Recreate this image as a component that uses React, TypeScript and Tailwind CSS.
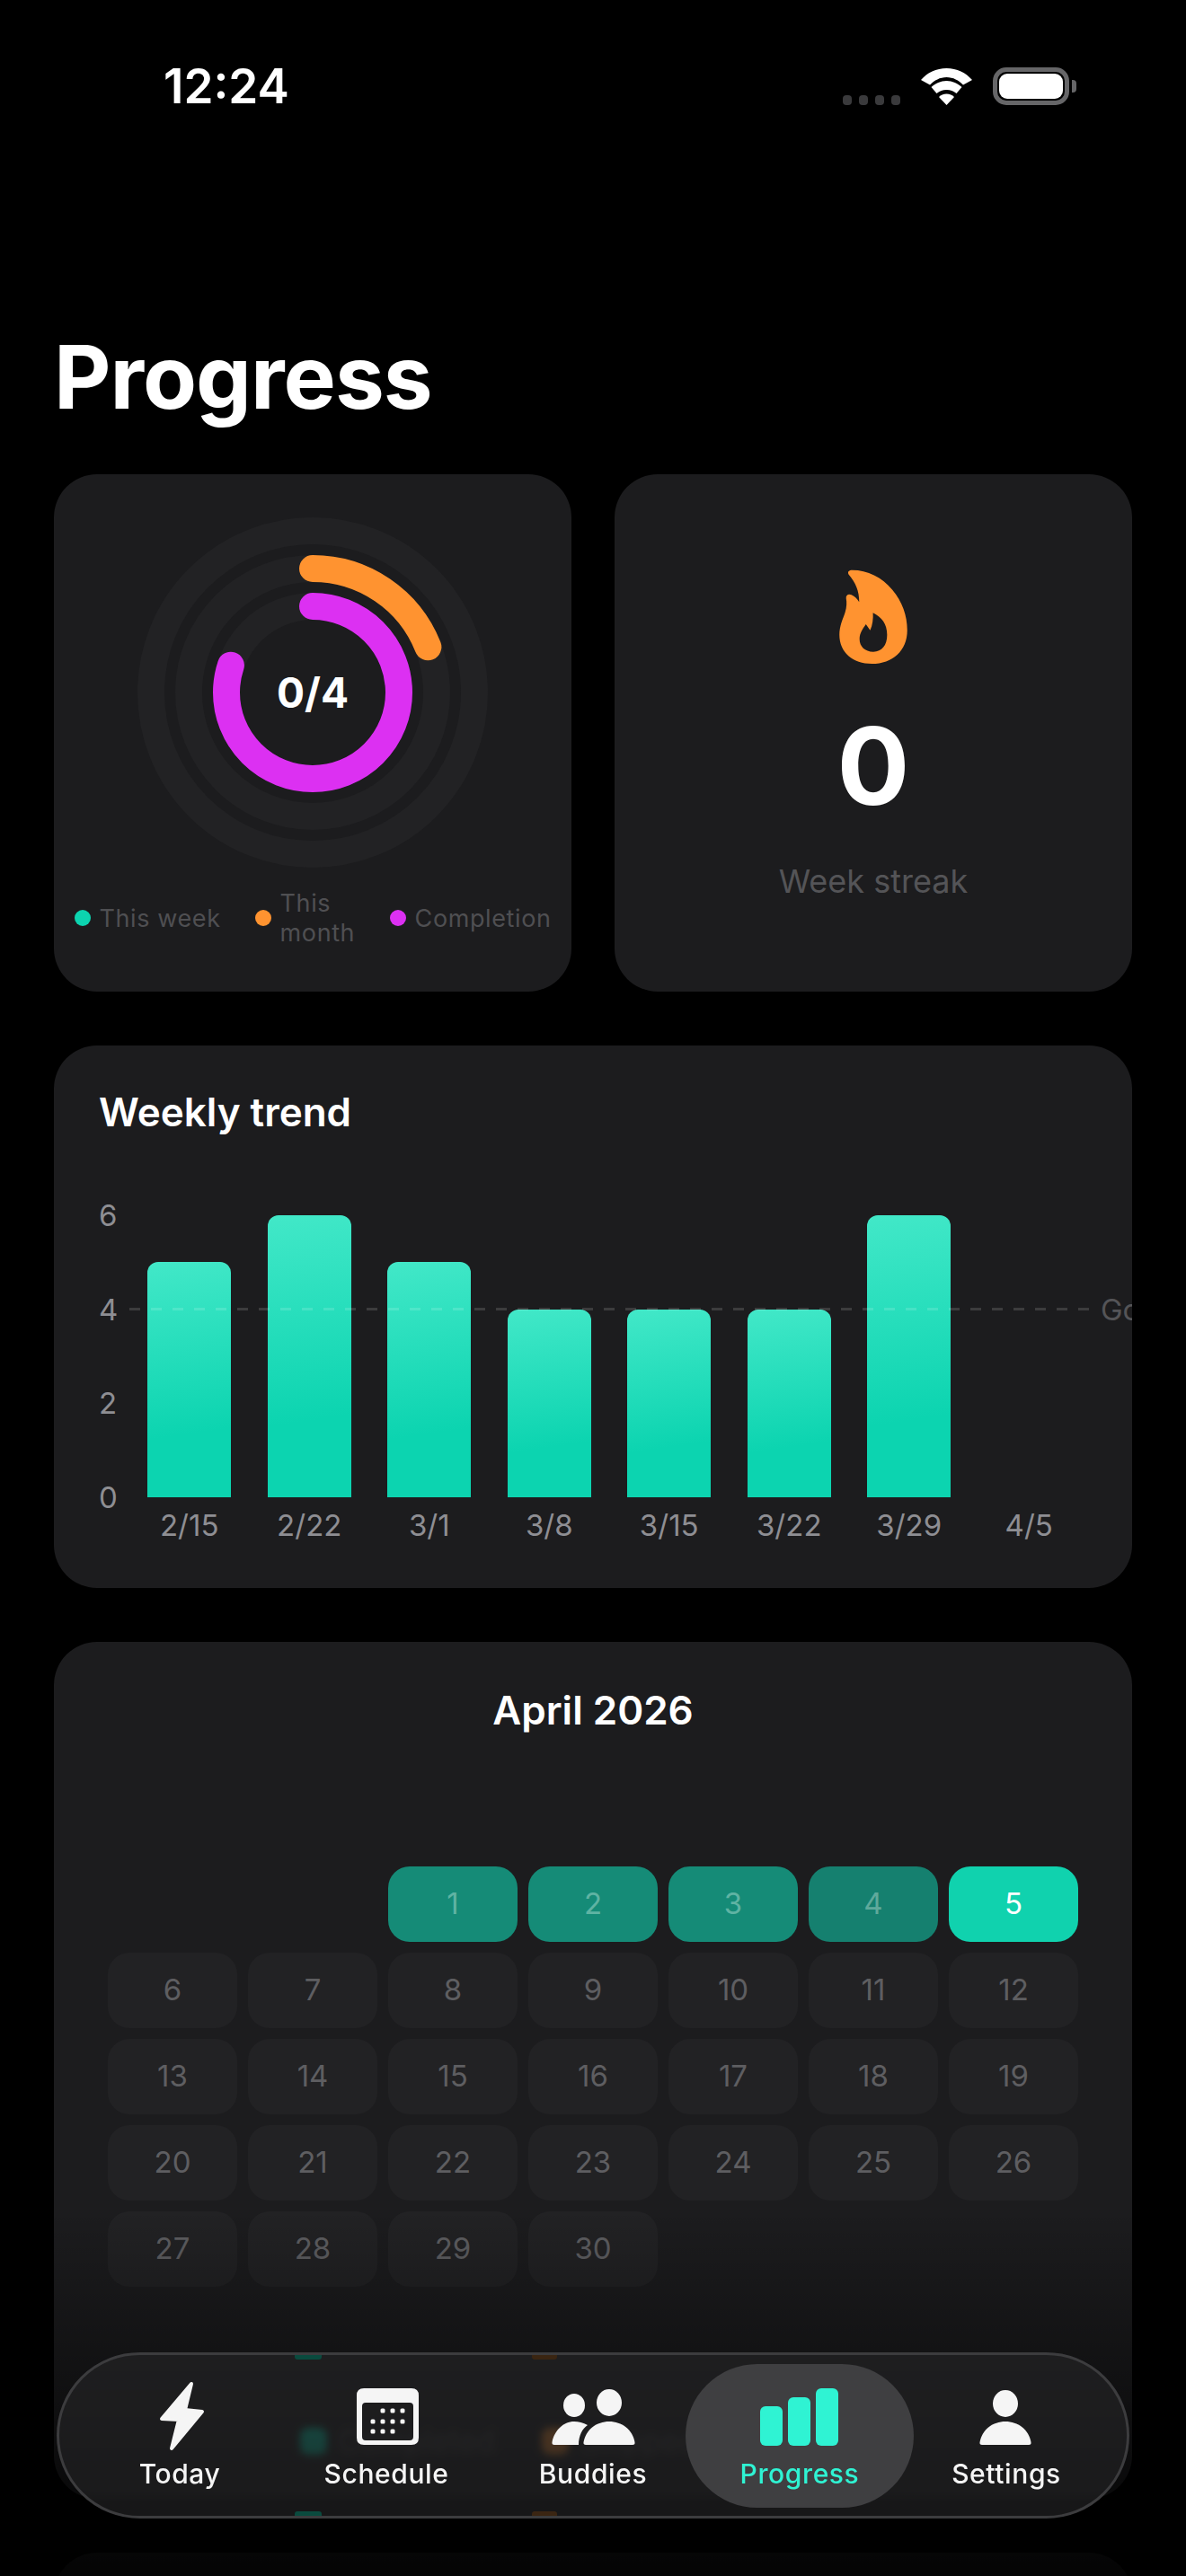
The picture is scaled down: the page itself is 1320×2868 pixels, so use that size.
import type { ReactNode } from "react";

const weeks = [
  { label: "2/15", value: 5 },
  { label: "2/22", value: 6 },
  { label: "3/1", value: 5 },
  { label: "3/8", value: 4 },
  { label: "3/15", value: 4 },
  { label: "3/22", value: 4 },
  { label: "3/29", value: 6 },
  { label: "4/5", value: 0 },
];

const UNIT = 52.33;

function Ring({ r, progress, color }: { r: number; progress: number; color?: string }) {
  const c = 2 * Math.PI * r;
  return (
    <>
      <circle cx="195" cy="195" r={r} fill="none" stroke="#222224" strokeWidth="30" />
      {color && progress > 0 && (
        <circle
          cx="195"
          cy="195"
          r={r}
          fill="none"
          stroke={color}
          strokeWidth="30"
          strokeLinecap="round"
          strokeDasharray={`${c * progress} ${c}`}
          transform="rotate(-90 195 195)"
        />
      )}
    </>
  );
}

function StatusBar() {
  return (
    <div className="flex h-[42px] items-end justify-between pl-[182px] pr-[122px] pt-0">
      <span className="text-[53px] font-semibold leading-[42px] text-white">12:24</span>
      <div className="flex items-end gap-[23px]">
        <div className="flex gap-[7.5px]">
          <span className="h-[11px] w-[10.5px] rounded-[4px] bg-[#3a3a3c]" />
          <span className="h-[11px] w-[10.5px] rounded-[4px] bg-[#3a3a3c]" />
          <span className="h-[11px] w-[10.5px] rounded-[4px] bg-[#3a3a3c]" />
          <span className="h-[11px] w-[10.5px] rounded-[4px] bg-[#3a3a3c]" />
        </div>
        <svg width="57" height="41" viewBox="0 0 57 41" fill="#fff">
          <path d="M0 13C7 5 17 0 28.5 0S50 5 57 13L47 18.500C42 13.500 36 10 28.500 10S15 13.500 10 18.500Z" />
          <path d="M11.500 21C16 17 22 14 28.500 14S41 17 45.500 21L39.500 28C36 25.500 33 24 28.500 24S21 25.500 17.500 28Z" />
          <path d="M20 32C22 30 25 28.500 28.500 28.500S35 30 37 32L28.500 41Z" />
        </svg>
        <div className="flex items-center gap-[3px]">
          <div className="h-[42px] w-[85px] rounded-[15px] border-[5px] border-[#666668] p-[2px]">
            <div className="h-full w-full rounded-[9px] bg-white" />
          </div>
          <span className="h-[14px] w-[5px] rounded-r-[4px] bg-[#666668]" />
        </div>
      </div>
    </div>
  );
}

function ProgressCard() {
  return (
    <div className="flex h-[576px] flex-col items-center rounded-[48px] bg-[#1c1c1e] pt-[48px]">
      <div className="relative h-[390px] w-[390px]">
        <svg width="390" height="390" viewBox="0 0 390 390">
          <Ring r={180} progress={0} />
          <Ring r={138} progress={0.19} color="#ff9330" />
          <Ring r={96} progress={0.8} color="#dc30f2" />
        </svg>
        <div className="absolute inset-0 flex items-center justify-center text-[46px] font-bold text-white">
          0/4
        </div>
      </div>
      <div className="mt-[22px] flex h-[68px] items-center gap-[38px] text-[27px] leading-[33px] tracking-[0.6px] text-[#4f4f52]">
        <div className="flex items-center gap-[10px]">
          <span className="h-[18px] w-[18px] rounded-full bg-[#0cd4b0]" />
          <span>This week</span>
        </div>
        <div className="flex items-center gap-[10px]">
          <span className="h-[18px] w-[18px] rounded-full bg-[#ff9330]" />
          <span className="w-[84px]">This month</span>
        </div>
        <div className="flex items-center gap-[10px]">
          <span className="h-[18px] w-[18px] rounded-full bg-[#dc30f2]" />
          <span>Completion</span>
        </div>
      </div>
    </div>
  );
}

function StreakCard() {
  return (
    <div className="flex h-[576px] flex-col items-center rounded-[48px] bg-[#1c1c1e] pt-[106px]">
      <svg width="80" height="105" viewBox="0 0 192 267" fill="#ff9330">
        <path
          fillRule="evenodd"
          d="M26 14C22 6 28 2 36 2C80 2 120 22 150 58C178 92 192 130 192 172C192 230 150 267 92 267C38 267 0 235 0 185C0 160 10 140 16 122C21 106 21 92 19 82C18 72 26 68 34 72C44 76 50 84 56 92C56 60 46 38 26 14ZM95 123C120 135 135 155 135 185C135 215 120 233 96 233C72 233 57 218 57 197C57 180 66 168 75 155L87 172C94 158 96 140 95 123Z"
        />
      </svg>
      <div className="mt-[49px] text-[120px] font-bold leading-[130px] text-white">0</div>
      <div className="mt-[41px] text-[36px] leading-[44px] text-[#545457]">Week streak</div>
    </div>
  );
}

function WeeklyTrend() {
  return (
    <div className="h-[604px] overflow-hidden rounded-[48px] bg-[#1c1c1e] pl-[50px] pt-[47px]">
      <h2 className="text-[44px] font-semibold leading-[54px] text-white">Weekly trend</h2>
      <div className="mt-[68px] flex">
        <div className="flex h-[354px] w-[34px] flex-col justify-between text-[33px] leading-[40px] text-[#8e8e93]">
          <span>6</span>
          <span>4</span>
          <span>2</span>
          <span>0</span>
        </div>
        <div className="relative mt-[20px] w-[1068px]">
          <div className="grid h-[314px] grid-cols-8 items-end">
            {weeks.map((w) => (
              <div key={w.label} className="flex justify-center">
                <div
                  className="w-[93px] rounded-t-[12px] bg-[linear-gradient(172deg,#42e8c8_0%,#0cd4b0_72%)]"
                  style={{ height: w.value * UNIT }}
                />
              </div>
            ))}
          </div>
          <svg className="absolute left-0 top-[103px]" width="1068" height="3">
            <line x1="0" y1="1.500" x2="1068" y2="1.500" stroke="#fff" strokeOpacity="0.14" strokeWidth="3" strokeDasharray="12 12" />
          </svg>
          <span className="absolute left-[1081px] top-[85px] text-[33px] leading-[40px] text-[#545457]">Goal</span>
          <div className="mt-[11px] grid grid-cols-8 text-center text-[33px] leading-[40px] text-[#8e8e93]">
            {weeks.map((w) => (
              <span key={w.label}>{w.label}</span>
            ))}
          </div>
        </div>
      </div>
    </div>
  );
}

function CalendarCard() {
  const days = Array.from({ length: 30 }, (_, i) => i + 1);
  return (
    <div className="h-[954px] rounded-[48px] bg-[#1c1c1e] px-[60px] pt-[49px]">
      <h2 className="text-center text-[44px] font-semibold leading-[54px] text-white">April 2026</h2>
      <div className="mt-[147px] grid grid-cols-7 gap-[12px]">
        <div className="col-span-2" />
        {days.map((d) => (
          <div
            key={d}
            className={
              d === 5
                ? "flex h-[84px] items-center justify-center rounded-[24px] bg-[#10d2ae] text-[33px] text-white"
                : d === 4
                  ? "flex h-[84px] items-center justify-center rounded-[24px] bg-[#15806f] text-[33px] text-[#5fa99b]"
                  : d < 4
                    ? "flex h-[84px] items-center justify-center rounded-[24px] bg-[#158b77] text-[33px] text-[#5fb3a3]"
                    : "flex h-[84px] items-center justify-center rounded-[24px] bg-[#222224] text-[33px] text-[#5e5e61]"
            }
          >
            {d}
          </div>
        ))}
      </div>
      <div className="mt-[152px] flex justify-center gap-[52px] text-[34px] leading-[40px] text-[#48484a]">
        <div className="flex items-center gap-[12px]">
          <span className="h-[30px] w-[30px] rounded-[9px] bg-[#00e0b8]" />
          <span>Completed</span>
        </div>
        <div className="flex items-center gap-[12px]">
          <span className="h-[30px] w-[30px] rounded-[9px] bg-[#ff9330]" />
          <span>Skipped</span>
        </div>
        <div className="flex items-center gap-[12px]">
          <span className="h-[30px] w-[30px] rounded-[9px] bg-[#3a3a3c]" />
          <span>Missed</span>
        </div>
      </div>
    </div>
  );
}

function TabItem({ label, active, children }: { label: string; active?: boolean; children: ReactNode }) {
  return (
    <div className="relative flex flex-1 flex-col items-center pt-[28px]">
      {active && <span className="absolute -inset-x-[12px] bottom-[9px] top-[10px] rounded-[80px] bg-[#3f3f41]" />}
      <svg className="relative" width="100" height="80" viewBox="0 0 100 80" fill={active ? "#2ff3d3" : "#f5f5f5"}>
        {children}
      </svg>
      <span
        className={
          active
            ? "relative mt-[6px] text-[30px] font-medium leading-[36px] tracking-[0.6px] text-[#2ff3d3]"
            : "relative mt-[6px] text-[30px] font-medium leading-[36px] tracking-[0.6px] text-[#f5f5f5]"
        }
      >
        {label}
      </span>
    </div>
  );
}

function TabBar() {
  return (
    <div className="absolute bottom-[64px] left-[63px] flex h-[185px] w-[1194px] rounded-[93px] border-[3px] border-[#3c3c3e] bg-[#262628]/60 px-[19px] backdrop-blur-[4px]">
      {/* legend colours bleeding through the glass edge */}
      <span className="absolute left-[262px] top-0 h-[5px] w-[30px] rounded-b-[3px] bg-[#0a4a3e]" />
      <span className="absolute left-[526px] top-0 h-[5px] w-[28px] rounded-b-[3px] bg-[#3a2512]" />
      <span className="absolute bottom-0 left-[262px] h-[5px] w-[30px] rounded-t-[3px] bg-[#0a4a3e]" />
      <span className="absolute bottom-0 left-[526px] h-[5px] w-[28px] rounded-t-[3px] bg-[#3a2512]" />
      <TabItem label="Today">
        <path
          d="M63 4L30 43L49 44L41 76L75 35L56 33Z"
          stroke="#f5f5f5"
          strokeWidth="4"
          strokeLinejoin="round"
        />
      </TabItem>
      <TabItem label="Schedule">
        <path
          fillRule="evenodd"
          d="M25 9H78Q86 9 86 17V64Q86 72 78 72H25Q17 72 17 64V17Q17 9 25 9ZM27 25Q23 25 23 29V63Q23 67 27 67H76Q80 67 80 63V29Q80 25 76 25Z"
        />
        {[
          [46, 34], [57, 34], [68, 34],
          [35, 46], [46, 46], [57, 46], [68, 46],
          [35, 57], [46, 57], [57, 57],
        ].map(([x, y]) => (
          <rect key={`${x}-${y}`} x={x - 2.5} y={y - 2.5} width="5" height="5" rx="1.500" />
        ))}
      </TabItem>
      <TabItem label="Buddies">
        <ellipse cx="29" cy="28" rx="12" ry="13" />
        <ellipse cx="68" cy="25" rx="14" ry="15" />
        <path d="M7 72Q4 72 4.500 69C7 56 17 46 29 46C34 46 39 47.500 44 50C38 54 34 62 34 72Z" />
        <path d="M42 72Q39 72 39.500 69C42 55 54 46 68 46C82 46 94 55 96.500 69Q97 72 94 72Z" />
      </TabItem>
      <TabItem label="Progress" active>
        <rect x="6" y="29" width="25" height="44" rx="6" />
        <rect x="37" y="19" width="25" height="54" rx="6" />
        <rect x="68" y="9" width="25" height="64" rx="6" />
      </TabItem>
      <TabItem label="Settings">
        <ellipse cx="49" cy="26" rx="14" ry="15" />
        <path d="M23 72Q20 72 20.500 69C23 55 35 46 49 46C63 46 75 55 77.500 69Q78 72 75 72Z" />
      </TabItem>
    </div>
  );
}

export default function App() {
  return (
    <div className="relative h-[2868px] w-[1320px] overflow-hidden bg-black font-[Inter,sans-serif]">
      <div className="pt-[75px]">
        <StatusBar />
      </div>
      <div className="flex flex-col px-[60px] pt-[243px]">
        <h1 className="text-[98px] font-bold leading-[120px] tracking-[-1px] text-white">Progress</h1>
        <div className="mt-[48px] grid grid-cols-2 gap-[48px]">
          <ProgressCard />
          <StreakCard />
        </div>
        <div className="mt-[60px] flex flex-col gap-[60px]">
          <WeeklyTrend />
          <CalendarCard />
          <div className="h-[300px] rounded-[48px] bg-[#1c1c1e]" />
        </div>
      </div>
      <div className="absolute inset-x-0 bottom-0 h-[408px] bg-gradient-to-b from-black/0 to-black/85" />
      <TabBar />
    </div>
  );
}
